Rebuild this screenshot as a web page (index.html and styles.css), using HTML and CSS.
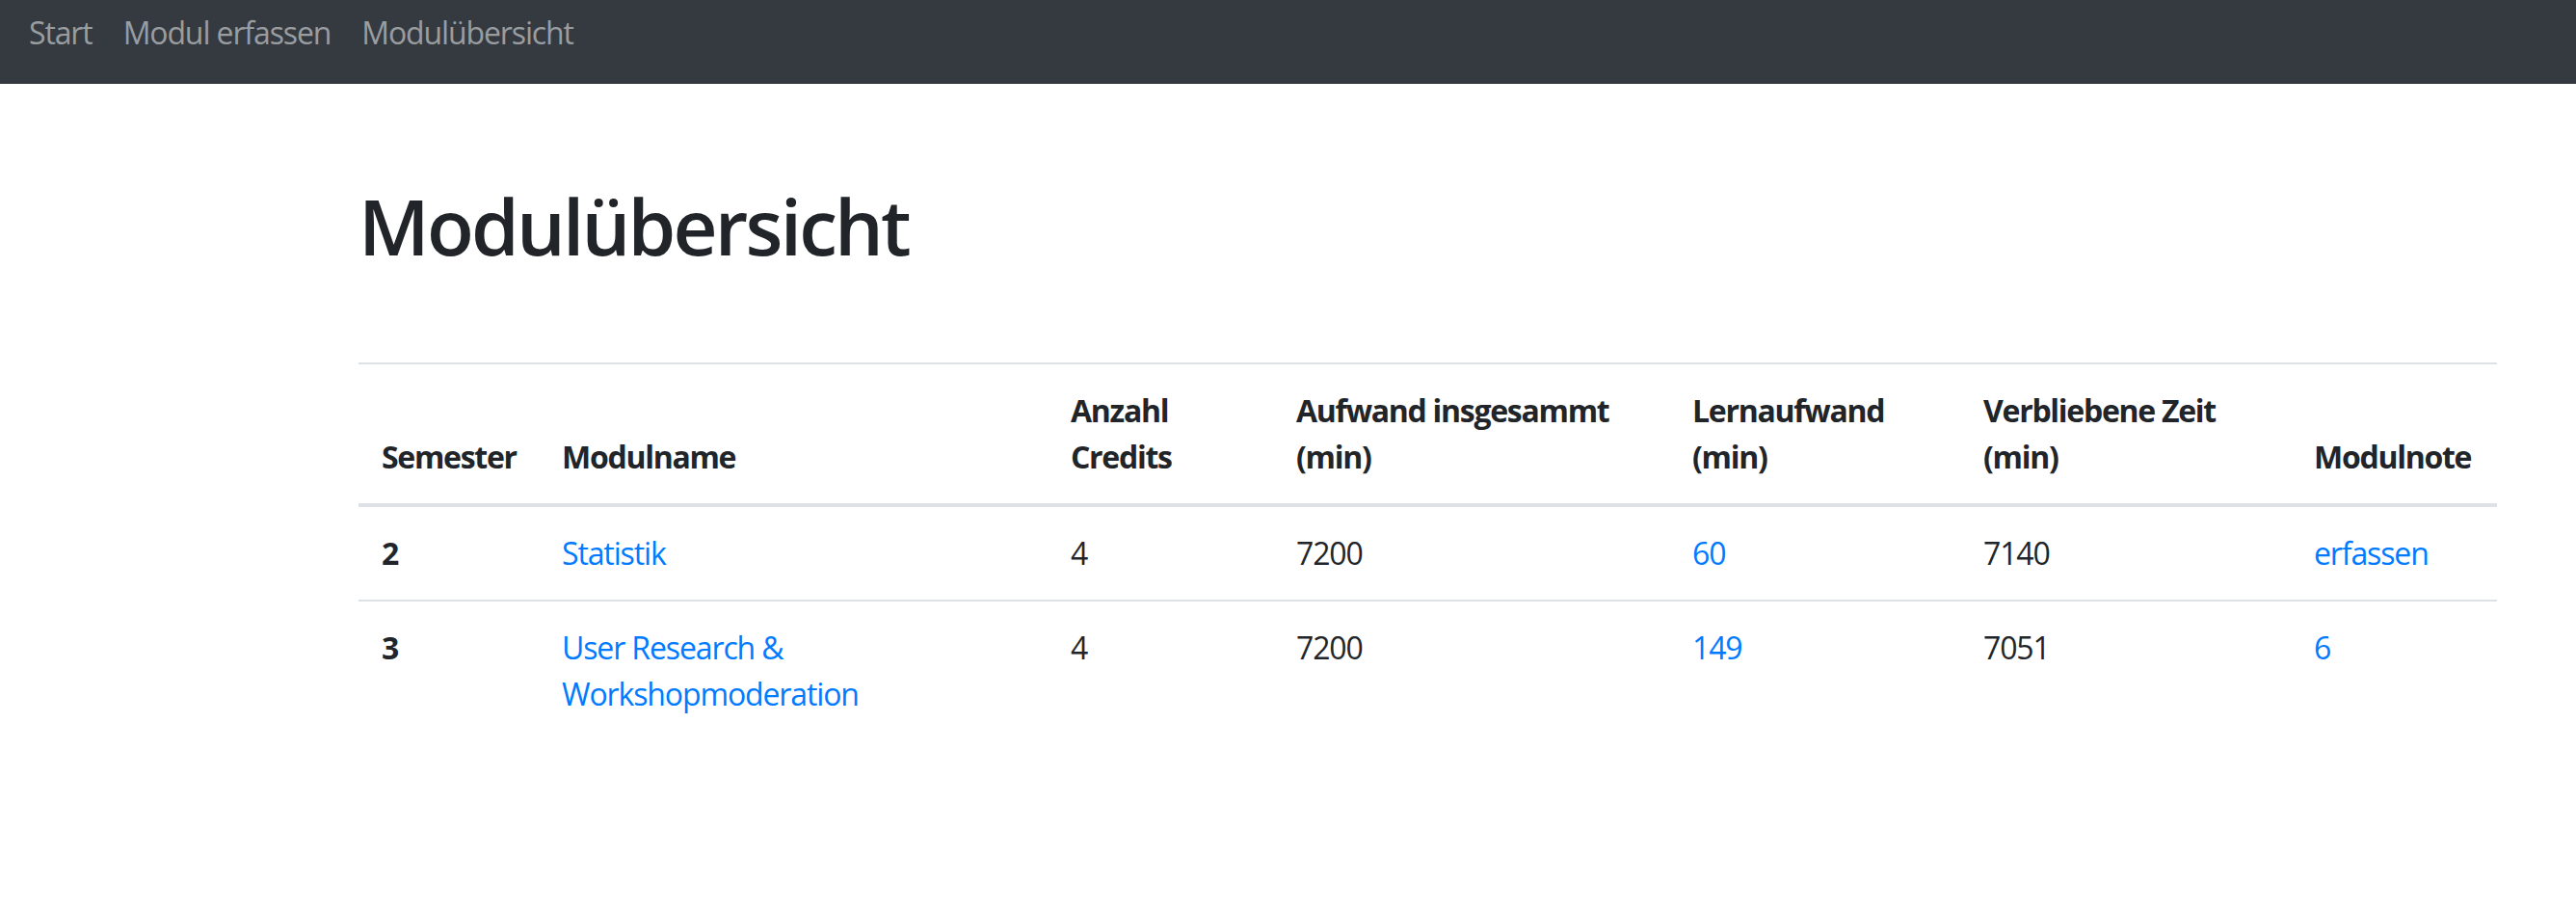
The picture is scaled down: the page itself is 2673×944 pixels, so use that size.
FILE: index.html
```html
<!DOCTYPE html>
<html lang="de">
<head>
<meta charset="utf-8">
<title>Modulübersicht</title>
<link rel="stylesheet" href="styles.css">
</head>
<body>
<nav class="navbar">
  <ul class="nav">
    <li><a class="nav-link" href="#">Start</a></li>
    <li><a class="nav-link" href="#">Modul erfassen</a></li>
    <li><a class="nav-link" href="#">Modulübersicht</a></li>
  </ul>
</nav>
<main class="page">
  <h1 class="title">Modulübersicht</h1>
  <table class="table">
    <colgroup>
      <col class="c-sem">
      <col class="c-name">
      <col class="c-cred">
      <col class="c-auf">
      <col class="c-lern">
      <col class="c-verb">
      <col class="c-note">
    </colgroup>
    <thead>
      <tr>
        <th>Semester</th>
        <th>Modulname</th>
        <th>Anzahl Credits</th>
        <th>Aufwand insgesammt (min)</th>
        <th>Lernaufwand (min)</th>
        <th>Verbliebene Zeit (min)</th>
        <th>Modulnote</th>
      </tr>
    </thead>
    <tbody>
      <tr>
        <th class="row-head">2</th>
        <td><a href="#">Statistik</a></td>
        <td>4</td>
        <td>7200</td>
        <td><a href="#">60</a></td>
        <td>7140</td>
        <td><a href="#">erfassen</a></td>
      </tr>
      <tr>
        <th class="row-head">3</th>
        <td><a href="#">User Research &amp; Workshopmoderation</a></td>
        <td>4</td>
        <td>7200</td>
        <td><a href="#">149</a></td>
        <td>7051</td>
        <td><a href="#">6</a></td>
      </tr>
    </tbody>
  </table>
</main>
</body>
</html>
```

FILE: styles.css
```css
* { box-sizing: border-box; }

html, body {
  margin: 0;
  padding: 0;
  background: #ffffff;
}

body {
  font-family: "Open Sans", "Noto Sans", "Liberation Sans", sans-serif;
  font-size: 32px;
  line-height: 48px;
  color: #212529;
  letter-spacing: -0.035em;
}

a {
  color: #007bff;
  text-decoration: none;
}

.navbar {
  background: #343a40;
  height: 87px;
  padding: 10px 14px 0 14px;
}

.nav {
  display: flex;
  list-style: none;
  margin: 0;
  padding: 0;
}

.nav-link {
  display: block;
  padding: 0 16px;
  color: #9a9da0;
}

.page {
  padding: 0 82px 0 372px;
}

.title {
  margin: 99px 0 94px 0;
  font-size: 80px;
  line-height: 96px;
  font-weight: 600;
  letter-spacing: -0.035em;
}

.table {
  width: 100%;
  table-layout: fixed;
  border-collapse: collapse;
}

.c-sem { width: 187px; }
.c-name { width: 528px; }
.c-cred { width: 234px; }
.c-auf { width: 411px; }
.c-lern { width: 302px; }
.c-verb { width: 343px; }
.c-note { width: 214px; }

.table th,
.table td {
  padding: 24px;
  text-align: left;
  vertical-align: top;
  border-top: 2px solid #dee2e6;
}

.table th {
  font-weight: 700;
  letter-spacing: -0.04em;
}

.table thead th {
  vertical-align: bottom;
  border-bottom: 4px solid #dee2e6;
}
```
